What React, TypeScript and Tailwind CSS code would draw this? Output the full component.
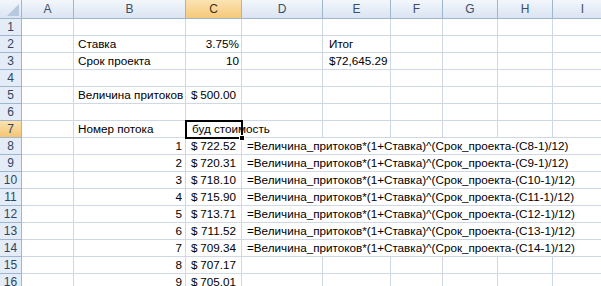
import type { ReactNode } from 'react'

const GRID =
  'grid grid-cols-[22px_52px_112px_56px_81px_68px_52px_55px_55px_60px]'
const CELL =
  'h-[17px] border-r border-b border-[#d0d7e5] whitespace-nowrap overflow-visible text-[11.7px] leading-[16px] text-black'
const ROW_HEAD =
  'h-[17px] border-r border-b border-[#9eb6ce] text-center text-[12px] leading-[16px] text-[#2f4563]'

const LETTERS = ['A', 'B', 'C', 'D', 'E', 'F', 'G', 'H', 'I']

const FLOWS = [
  '722.52',
  '720.31',
  '718.10',
  '715.90',
  '713.71',
  '711.52',
  '709.34',
  '707.17',
  '705.01',
]

function Money({ value }: { value: string }) {
  return (
    <div className={`${CELL} flex justify-between pl-[5px] pr-[5px]`}>
      <span>$</span>
      <span>{value}</span>
    </div>
  )
}

function Empty() {
  return <div className={CELL} />
}

/** Строка листа: заголовок строки + ячейки A..I */
function Row({ n, children }: { n: number; children: ReactNode }) {
  const active = n === 7
  return (
    <>
      <div
        className={`${ROW_HEAD} ${
          active
            ? 'bg-gradient-to-b from-[#fbe2b0] to-[#f4c573] text-[#1e2a3a]'
            : 'bg-[#e4ecf7]'
        }`}
      >
        {n}
      </div>
      {children}
    </>
  )
}

function Blank({ count }: { count: number }) {
  return (
    <>
      {Array.from({ length: count }).map((_, i) => (
        <div key={i} className={CELL} />
      ))}
    </>
  )
}

export default function App() {
  return (
    <div
      className="relative h-[286px] w-[601px] overflow-hidden bg-white"
      style={{ fontFamily: '"Liberation Sans", Arial, sans-serif' }}
    >
      {/* шапка столбцов */}
      <div className={`${GRID} h-[19px]`}>
        <div className="relative h-[19px] border-r border-b border-[#9eb6ce] bg-gradient-to-b from-[#f3f7fc] to-[#dae4f1]">
          <svg
            className="absolute right-[2px] bottom-[2px]"
            width="12"
            height="12"
            viewBox="0 0 12 12"
          >
            <polygon points="12,0 12,12 0,12" fill="#b7c9de" />
          </svg>
        </div>
        {LETTERS.map((l) => (
          <div
            key={l}
            className={`h-[19px] border-r border-b border-[#9eb6ce] text-center text-[12px] leading-[19px] ${
              l === 'C'
                ? 'bg-gradient-to-b from-[#fbe3b3] to-[#f5c979] text-[#3a3020]'
                : 'bg-gradient-to-b from-[#f3f7fc] to-[#dae4f1] text-[#3b4e68]'
            }`}
          >
            {l}
          </div>
        ))}
      </div>

      <div className={GRID}>
        <Row n={1}>
          <Blank count={9} />
        </Row>

        <Row n={2}>
          <Empty />
          <div className={`${CELL} pl-[4px]`}>Ставка</div>
          <div className={`${CELL} pr-[2px] text-right`}>3.75%</div>
          <Empty />
          <div className={`${CELL} pl-[6px]`}>Итог</div>
          <Blank count={4} />
        </Row>

        <Row n={3}>
          <Empty />
          <div className={`${CELL} pl-[4px]`}>Срок проекта</div>
          <div className={`${CELL} pr-[2px] text-right`}>10</div>
          <Empty />
          <div className={`${CELL} pl-[6px]`}>$72,645.29</div>
          <Blank count={4} />
        </Row>

        <Row n={4}>
          <Blank count={9} />
        </Row>

        <Row n={5}>
          <Empty />
          <div className={`${CELL} pl-[4px]`}>Величина притоков</div>
          <Money value="500.00" />
          <Blank count={6} />
        </Row>

        <Row n={6}>
          <Blank count={9} />
        </Row>

        <Row n={7}>
          <Empty />
          <div className={`${CELL} pl-[4px]`}>Номер потока</div>
          <div className={`${CELL} relative col-span-2 pl-[6px]`}>
            буд стоимость
            <div className="pointer-events-none absolute top-[-1px] left-[-1px] h-[19px] w-[58px] border-2 border-black" />
            <div className="absolute top-[14px] left-[53px] h-[6px] w-[6px] border border-white bg-black" />
          </div>
          <Blank count={5} />
        </Row>

        {FLOWS.map((v, i) => {
          const n = i + 8
          return (
            <Row key={n} n={n}>
              <Empty />
              <div className={`${CELL} pr-[3px] text-right`}>{i + 1}</div>
              <Money value={v} />
              {n <= 14 ? (
                <div className={`${CELL} col-span-6 pl-[5px]`}>
                  =Величина_притоков*(1+Ставка)^(Срок_проекта-(C{n}-1)/12)
                </div>
              ) : (
                <Blank count={6} />
              )}
            </Row>
          )
        })}
      </div>
    </div>
  )
}
